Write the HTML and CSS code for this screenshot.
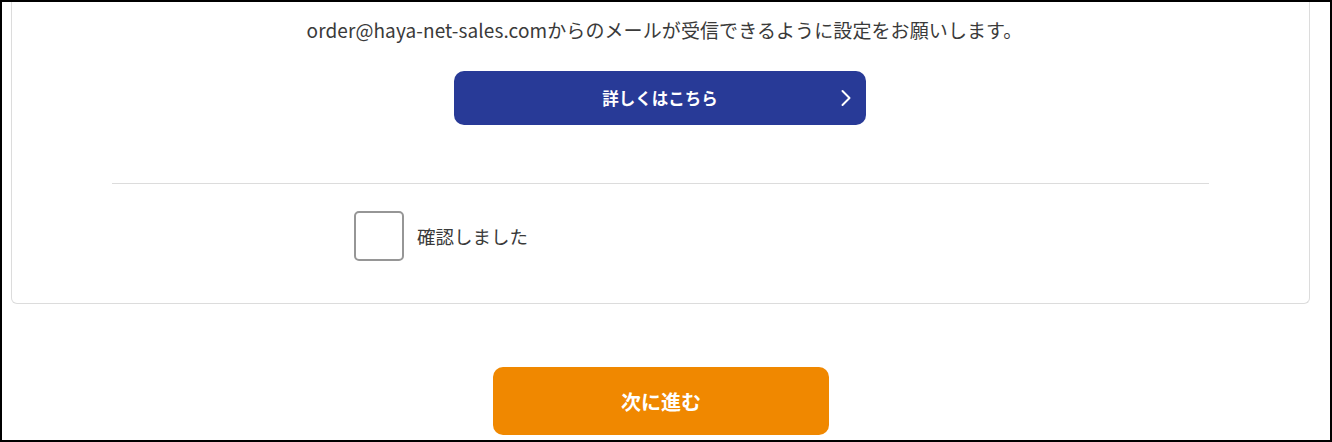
FILE: index.html
```html
<!DOCTYPE html>
<html lang="ja">
<head>
<meta charset="utf-8">
<title>確認</title>
<link rel="stylesheet" href="styles.css">
</head>
<body>
<div class="frame">
  <section class="card">
    <p class="notice">order@haya-net-sales.comからのメールが受信できるように設定をお願いします。</p>
    <a class="btn-detail" href="#">
      <span class="btn-detail-label">詳しくはこちら</span>
      <svg class="chevron" width="12" height="18" viewBox="0 0 12 18" aria-hidden="true"><path d="M2.5 2 L9.5 9 L2.5 16" fill="none" stroke="#fff" stroke-width="2" stroke-linecap="round" stroke-linejoin="round"/></svg>
    </a>
    <div class="divider"></div>
    <label class="confirm">
      <span class="checkbox"></span>
      <span class="confirm-label">確認しました</span>
    </label>
  </section>
  <div class="actions">
    <button class="btn-next" type="button">次に進む</button>
  </div>
</div>
</body>
</html>
```

FILE: styles.css
```css
html, body {
  margin: 0;
  padding: 0;
  background: #fff;
}
body {
  font-family: "Noto Sans CJK JP", "Noto Sans", sans-serif;
  color: #333;
}
.frame {
  width: 1332px;
  height: 442px;
  box-sizing: border-box;
  border: 2px solid #000;
  overflow: hidden;
}
.card {
  margin-left: 9px;
  width: 1299px;
  box-sizing: border-box;
  border: 1px solid #dcdcdc;
  border-top: none;
  border-radius: 0 0 6px 6px;
  padding: 14px 100px 42px;
  display: flex;
  flex-direction: column;
  align-items: center;
}
.notice {
  margin: 0 0 0 8px;
  font-size: 19px;
  line-height: 27px;
  color: #3a3a3a;
  text-align: center;
  letter-spacing: 0.1px;
}
.btn-detail {
  margin-top: 28px;
  margin-right: 1px;
  width: 412px;
  height: 54px;
  box-sizing: border-box;
  background: #283a97;
  border-radius: 10px;
  color: #fff;
  text-decoration: none;
  display: flex;
  align-items: center;
  justify-content: center;
  position: relative;
}
.btn-detail-label {
  font-size: 16.5px;
  font-weight: 700;
}
.chevron {
  position: absolute;
  right: 14px;
  top: 50%;
  margin-top: -9px;
}
.divider {
  margin-top: 58px;
  align-self: stretch;
  height: 1px;
  background: #dcdcdc;
}
.confirm {
  margin-top: 27px;
  align-self: flex-start;
  margin-left: 242px;
  display: flex;
  align-items: center;
  gap: 13px;
  cursor: pointer;
}
.checkbox {
  width: 50px;
  height: 50px;
  box-sizing: border-box;
  border: 2px solid #969696;
  border-radius: 5px;
  background: #fff;
}
.confirm-label {
  font-size: 18.5px;
  color: #3a3a3a;
}
.actions {
  margin-top: 63px;
  display: flex;
  justify-content: center;
  padding-right: 10px;
}
.btn-next {
  width: 336px;
  height: 68px;
  border: none;
  border-radius: 10px;
  background: #f08800;
  color: #fff;
  font-family: "Noto Sans CJK JP", "Noto Sans", sans-serif;
  font-size: 20px;
  font-weight: 700;
}
```
